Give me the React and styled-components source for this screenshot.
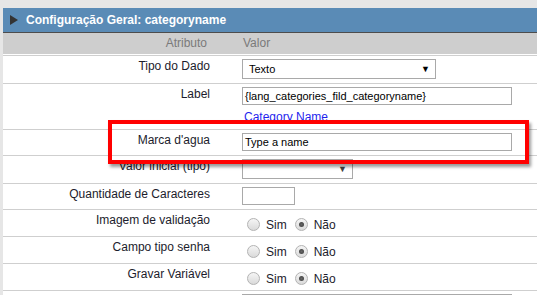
import React from "react";
import styled, { createGlobalStyle } from "styled-components";

const GlobalStyle = createGlobalStyle`
  html, body { margin: 0; padding: 0; }
  body {
    background: #e6e6e6;
    font-family: "Liberation Sans", Arial, sans-serif;
    font-size: 12px;
    color: #1c1c2c;
    overflow: hidden;
  }
`;

const Panel = styled.div`
  position: relative;
  margin: 8px 0 0 3px;
  background: #fff;
  height: 287px;
  overflow: hidden;
`;

const TitleBar = styled.div`
  height: 25px;
  box-sizing: border-box;
  background: #5a8bb6;
  border-bottom: 1px solid #4d4d4d;
  display: flex;
  align-items: center;
  padding-left: 7px;
  gap: 8px;
  color: #fff;
  font-weight: bold;
  font-size: 12px;
`;

const Triangle = styled.span`
  width: 0;
  height: 0;
  border-top: 5px solid transparent;
  border-bottom: 5px solid transparent;
  border-left: 8px solid #333;
`;

const Grid = styled.div`
  display: grid;
  grid-template-columns: 212px 1fr;
`;

const HeadRow = styled(Grid)`
  height: 21px;
  background: #cecece;
  color: #7a7a7a;
  line-height: 21px;
  margin-bottom: 1px;
`;

const HeadLabel = styled.div`
  text-align: right;
  padding-right: 8px;
`;

const HeadValue = styled.div`
  padding-left: 28px;
`;

const Row = styled(Grid)`
  border-top: 1px solid #cfcfcf;
`;

const LabelCell = styled.div`
  text-align: right;
  padding: 3px 5px 4px 0;
  line-height: 15px;
`;

const ValueCell = styled.div`
  padding: 3px 0 4px 27px;
  display: flex;
  flex-direction: column;
  align-items: flex-start;
`;

const Input = styled.div`
  box-sizing: border-box;
  width: ${(p) => p.$w}px;
  height: 18px;
  border: 1px solid #a9a9a9;
  background: #fff;
  font-size: 11px;
  line-height: 16px;
  padding-left: 2px;
  color: #000;
  white-space: nowrap;
  overflow: hidden;
`;

const Select = styled.div`
  box-sizing: border-box;
  width: ${(p) => p.$w}px;
  height: 20px;
  border: 1px solid #a9a9a9;
  background: #fff;
  font-size: 11px;
  color: #000;
  display: flex;
  align-items: center;
  justify-content: space-between;
  padding: 0 5px 0 6px;
`;

const Arrow = styled.span`
  font-size: 9px;
  color: ${(p) => p.$c};
  line-height: 1;
`;

const LinkText = styled.span`
  color: #1f1fee;
  margin: 5px 0 0 2px;
  line-height: 15px;
`;

const RadioGroup = styled.div`
  display: flex;
  align-items: center;
  margin: 4px 0 0 5px;
  height: 15px;
`;

const Radio = styled.span`
  box-sizing: border-box;
  width: 13px;
  height: 13px;
  border-radius: 50%;
  border: 1px solid #b3b3b3;
  background: linear-gradient(#f5f5f5, #dadada);
  display: flex;
  align-items: center;
  justify-content: center;
  margin-right: 6px;
  &::after {
    content: "";
    width: 5px;
    height: 5px;
    border-radius: 50%;
    background: ${(p) => (p.$checked ? "radial-gradient(#666, #3a3a3a)" : "transparent")};
  }
`;

const RadioText = styled.span`
  margin-right: 8px;
  line-height: 15px;
  padding-top: 2px;
`;

const Highlight = styled.div`
  position: absolute;
  left: 105px;
  top: 112px;
  width: 421px;
  height: 44px;
  box-sizing: border-box;
  border: 4px solid #ff0000;
  box-shadow: 2px 3px 3px rgba(0, 0, 0, 0.4);
  pointer-events: none;
`;

const YesNo = () => (
  <RadioGroup>
    <Radio />
    <RadioText>Sim</RadioText>
    <Radio $checked />
    <RadioText>Não</RadioText>
  </RadioGroup>
);

export default function App() {
  return (
    <>
      <GlobalStyle />
      <Panel>
        <TitleBar>
          <Triangle />
          Configuração Geral: categoryname
        </TitleBar>
        <HeadRow>
          <HeadLabel>Atributo</HeadLabel>
          <HeadValue>Valor</HeadValue>
        </HeadRow>
        <Row>
          <LabelCell>Tipo do Dado</LabelCell>
          <ValueCell>
            <Select $w={194}>
              Texto
              <Arrow $c="#000">▼</Arrow>
            </Select>
          </ValueCell>
        </Row>
        <Row>
          <LabelCell>Label</LabelCell>
          <ValueCell>
            <Input $w={270}>{"{lang_categories_fild_categoryname}"}</Input>
            <LinkText>Category Name</LinkText>
          </ValueCell>
        </Row>
        <Row>
          <LabelCell>Marca d'agua</LabelCell>
          <ValueCell>
            <Input $w={270}>Type a name</Input>
          </ValueCell>
        </Row>
        <Row>
          <LabelCell>Valor inicial (tipo)</LabelCell>
          <ValueCell>
            <Select $w={111}>
              <span />
              <Arrow $c="#444">▼</Arrow>
            </Select>
          </ValueCell>
        </Row>
        <Row>
          <LabelCell>Quantidade de Caracteres</LabelCell>
          <ValueCell>
            <Input $w={53} />
          </ValueCell>
        </Row>
        <Row>
          <LabelCell>Imagem de validação</LabelCell>
          <ValueCell>
            <YesNo />
          </ValueCell>
        </Row>
        <Row>
          <LabelCell>Campo tipo senha</LabelCell>
          <ValueCell>
            <YesNo />
          </ValueCell>
        </Row>
        <Row>
          <LabelCell>Gravar Variável</LabelCell>
          <ValueCell>
            <YesNo />
          </ValueCell>
        </Row>
        <Row>
          <LabelCell>&nbsp;</LabelCell>
          <ValueCell>
            <Input $w={270} />
          </ValueCell>
        </Row>
        <Highlight />
      </Panel>
    </>
  );
}
